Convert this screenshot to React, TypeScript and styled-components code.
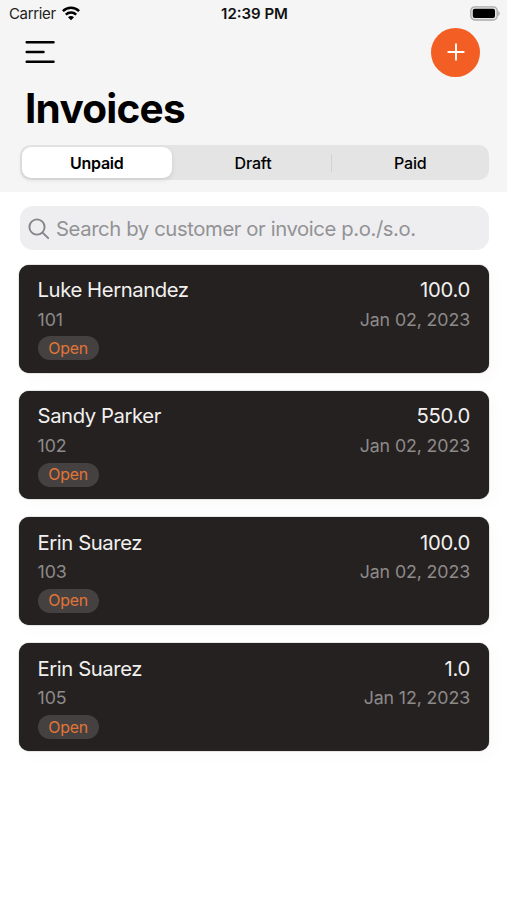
import React from "react";
import styled, { createGlobalStyle } from "styled-components";

const GlobalStyle = createGlobalStyle`
  * { box-sizing: border-box; }
  body {
    margin: 0;
    background: #fff;
    font-family: Inter, "Liberation Sans", sans-serif;
    color: #000;
  }
  button { font: inherit; color: inherit; border: 0; padding: 0; background: none; }
`;

const Screen = styled.main`
  display: flex;
  flex-direction: column;
  height: 900px;
  overflow: hidden;
  background: #fff;
`;

const Header = styled.header`
  height: 192px;
  background: #f5f5f5;
`;

const StatusBar = styled.div`
  display: grid;
  grid-template-columns: 1fr auto 1fr;
  align-items: center;
  height: 27px;
  padding: 0 7px 0 9px;
`;

const Carrier = styled.div`
  display: flex;
  align-items: center;
  gap: 6px;
  font-size: 15px;
  letter-spacing: -0.35px;
  color: #222;
`;

const Clock = styled.time`
  font-size: 15px;
  font-weight: 600;
  letter-spacing: 0;
  color: #111;
`;

const BatteryIcon = styled.svg`
  justify-self: end;
`;

const NavBar = styled.nav`
  display: flex;
  align-items: center;
  justify-content: space-between;
  height: 50px;
  padding: 0 27px 0 25px;
`;

const IconButton = styled.button`
  display: flex;
`;

const AddButton = styled(IconButton)`
  align-items: center;
  justify-content: center;
  width: 49px;
  height: 49px;
  border-radius: 50%;
  background: #f25e24;
`;

const Title = styled.h1`
  margin: 7px 0 0 25px;
  height: 50px;
  line-height: 50px;
  font-size: 40.5px;
  font-weight: 700;
  letter-spacing: -0.75px;
`;

const Segments = styled.div`
  display: grid;
  grid-template-columns: 150.5px 160px 1fr;
  height: 35px;
  margin: 11px 18.5px 0 19.5px;
  padding: 2px;
  border-radius: 10px;
  background: #e4e4e5;
`;

const Segment = styled.button<{ $active?: boolean; $divided?: boolean }>`
  display: flex;
  align-items: center;
  justify-content: center;
  padding-left: ${(p) => (p.$active ? 0 : 2)}px;
  font-size: 16px;
  font-weight: ${(p) => (p.$active ? 600 : 500)};
  letter-spacing: ${(p) => (p.$active ? "-0.25px" : "-0.15px")};
  border-radius: ${(p) => (p.$active ? "9px" : "0")};
  background: ${(p) =>
    p.$active
      ? "#fff"
      : p.$divided
        ? "linear-gradient(#d2d2d4, #d2d2d4) 100% 50% / 1px 18px no-repeat"
        : "none"};
  box-shadow: ${(p) => (p.$active ? "0 2px 5px rgba(0, 0, 0, 0.1)" : "none")};
`;

const SearchField = styled.label`
  display: flex;
  align-items: center;
  gap: 6px;
  height: 44px;
  margin: 14px 18.5px 14.8px 19.5px;
  padding-left: 8.5px;
  border-radius: 13px;
  background: #eeeef0;
  color: #8e8e92;
`;

const SearchIcon = styled.svg`
  margin-top: 1px;
`;

const SearchInput = styled.input`
  flex: 1;
  min-width: 0;
  padding: 0;
  border: 0;
  outline: 0;
  background: none;
  font: 400 20.3px Inter, "Liberation Sans", sans-serif;
  letter-spacing: -0.4px;
  &::placeholder { color: #929295; opacity: 1; }
`;

const InvoiceList = styled.section`
  display: grid;
  gap: 18.2px;
  padding: 0 18.5px 0 19.4px;
`;

const Card = styled.article`
  height: 108px;
  padding: 10.5px 18.5px 0 18.2px;
  border-radius: 10px;
  background: #252120;
  box-shadow: 0 0 1px #161313, 5px 5px 18px rgba(0, 0, 0, 0.025);
`;

const CardRow = styled.div`
  display: flex;
  justify-content: space-between;
  height: 29.5px;
  line-height: 29.5px;
`;

const Customer = styled.span`
  font-size: 20.3px;
  letter-spacing: -0.43px;
  color: #f2f0ef;
`;

const Amount = styled(Customer)`
  letter-spacing: -0.3px;
`;

const Detail = styled.span`
  font-size: 17.8px;
  letter-spacing: -0.12px;
  color: #8d8a8a;
`;

const Status = styled.span`
  display: flex;
  align-items: center;
  justify-content: center;
  width: 61px;
  height: 24px;
  margin-top: 2.2px;
  border-radius: 12px;
  background: #454141;
  color: #e07537;
  font-size: 15.9px;
  letter-spacing: -0.25px;
`;

const tabs = ["Unpaid", "Draft", "Paid"];

const invoices = [
  { customer: "Luke Hernandez", number: "101", amount: "100.0", date: "Jan 02, 2023" },
  { customer: "Sandy Parker", number: "102", amount: "550.0", date: "Jan 02, 2023" },
  { customer: "Erin Suarez", number: "103", amount: "100.0", date: "Jan 02, 2023" },
  { customer: "Erin Suarez", number: "105", amount: "1.0", date: "Jan 12, 2023" },
];

export default function App() {
  return (
    <Screen>
      <GlobalStyle />
      <Header>
        <StatusBar>
          <Carrier>
            Carrier
            <svg width="18" height="15" viewBox="0 0 18 15" fill="none" stroke="#000" strokeWidth="2.5">
              <path d="M.9 5.1C5.5.7 12.5.7 17.1 5.1" />
              <path d="M3.8 8.6c2.9-2.8 7.5-2.8 10.4 0" />
              <path d="M9 14.2 6 11.2c1.7-1.5 4.3-1.5 6 0Z" fill="#000" stroke="none" />
            </svg>
          </Carrier>
          <Clock>12:39 PM</Clock>
          <BatteryIcon width="30" height="15" viewBox="0 0 30 15">
            <rect x="0.8" y="0.8" width="26.4" height="13.2" rx="4" fill="#e4e4e4" stroke="#aaa" strokeWidth="1.3" />
            <rect x="2.8" y="2.8" width="22.2" height="9.2" rx="2" fill="#000" />
            <path d="M28.2 5v5c2-.8 2-4.2 0-5Z" fill="#aaa" />
          </BatteryIcon>
        </StatusBar>
        <NavBar>
          <IconButton aria-label="Menu">
            <svg width="30" height="24" viewBox="0 0 30 24" stroke="#000" strokeWidth="2.5" strokeLinecap="round">
              <path d="M1.7 2.2h26.8M1.7 12h16.8M1.7 21.8h26.8" />
            </svg>
          </IconButton>
          <AddButton aria-label="Add invoice">
            <svg width="18" height="18" viewBox="0 0 18 18" stroke="#fff" strokeWidth="1.9" strokeLinecap="round">
              <path d="M9 1.3v15.4M1.3 9h15.4" />
            </svg>
          </AddButton>
        </NavBar>
        <Title>Invoices</Title>
        <Segments>
          {tabs.map((tab, i) => (
            <Segment key={tab} $active={i === 0} $divided={i === 1}>
              {tab}
            </Segment>
          ))}
        </Segments>
      </Header>
      <SearchField>
        <SearchIcon width="22" height="22" viewBox="0 0 22 22" fill="none" stroke="#858589" strokeWidth="1.9" strokeLinecap="round">
          <circle cx="9" cy="9" r="7.6" />
          <path d="m14.6 14.6 5.6 5.6" />
        </SearchIcon>
        <SearchInput placeholder="Search by customer or invoice p.o./s.o." />
      </SearchField>
      <InvoiceList>
        {invoices.map((invoice) => (
          <Card key={invoice.number}>
            <CardRow>
              <Customer>{invoice.customer}</Customer>
              <Amount>{invoice.amount}</Amount>
            </CardRow>
            <CardRow>
              <Detail>{invoice.number}</Detail>
              <Detail>{invoice.date}</Detail>
            </CardRow>
            <Status>Open</Status>
          </Card>
        ))}
      </InvoiceList>
    </Screen>
  );
}
